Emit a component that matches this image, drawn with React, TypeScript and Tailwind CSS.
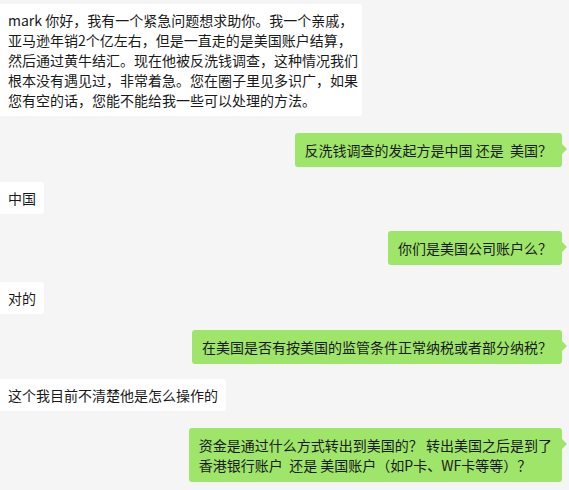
import React from "react";

const font = { fontFamily: '"Noto Sans CJK SC", "Noto Sans", sans-serif' };

function Left({ children, className = "" }: { children: React.ReactNode; className?: string }) {
  return (
    <div className={`flex justify-start ${className}`}>
      <div className="bg-white rounded-r-[3px] pl-[8px] pr-[8px] py-[6px] text-[14px] leading-[20px] text-[#1a1a1a] whitespace-pre">
        {children}
      </div>
    </div>
  );
}

function Right({ children, className = "" }: { children: React.ReactNode; className?: string }) {
  return (
    <div className={`flex justify-end pr-[7px] ${className}`}>
      <div className="relative bg-[#9ee56a] rounded-[3px] px-[10px] py-[7px] text-[14px] leading-[20px] text-[#1a1a1a] whitespace-pre">
        {children}
        <span className="absolute top-[11px] right-[-5px] w-0 h-0 border-y-[5px] border-y-transparent border-l-[5px] border-l-[#9ee56a]" />
      </div>
    </div>
  );
}

export default function App() {
  return (
    <div className="w-[569px] h-[490px] bg-[#f5f5f5] overflow-hidden pt-[4px]" style={font}>
      <div className="flex justify-start">
        <div className="w-[362px] bg-white rounded-r-[3px] pl-[8px] py-[6px] text-[14px] leading-[20px] text-[#1a1a1a] whitespace-pre">
          {"mark 你好，我有一个紧急问题想求助你。我一个亲戚，\n亚马逊年销2个亿左右，但是一直走的是美国账户结算，\n然后通过黄牛结汇。现在他被反洗钱调查，这种情况我们\n根本没有遇见过，非常着急。您在圈子里见多识广，如果\n您有空的话，您能不能给我一些可以处理的方法。"}
        </div>
      </div>
      <Right className="mt-[17px]">{"反洗钱调查的发起方是中国 还是  美国？"}</Right>
      <Left className="mt-[15px]">中国</Left>
      <Right className="mt-[17px]">你们是美国公司账户么？</Right>
      <Left className="mt-[17px]">对的</Left>
      <Right className="mt-[16px]">在美国是否有按美国的监管条件正常纳税或者部分纳税？</Right>
      <Left className="mt-[15px]">这个我目前不清楚他是怎么操作的</Left>
      <Right className="mt-[17px]">{"资金是通过什么方式转出到美国的？ 转出美国之后是到了\n香港银行账户  还是 美国账户（如P卡、WF卡等等）？"}</Right>
    </div>
  );
}
